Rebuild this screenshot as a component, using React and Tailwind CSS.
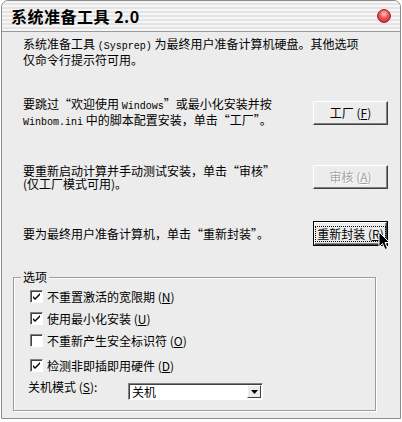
import React from 'react'

const Mono = ({ children }) => (
    <span className="font-['Liberation_Mono',monospace] text-[10px] leading-[13px]">{children}</span>
)

const Key = ({ children }) => <span className="underline">{children}</span>

const Button = ({ children, isDefault, disabled }) => {
    if (isDefault) {
        return (
            <div className="w-[75px] h-[25px] border border-black">
                <div className="w-full h-full border-t border-l border-white border-r border-b border-r-[#404040] border-b-[#404040] shadow-[inset_-1px_-1px_0_#808080] flex items-center justify-center">
                    <div className="border border-dotted border-black px-[1px] leading-[14px] text-[12px]">
                        {children}
                    </div>
                </div>
            </div>
        )
    }
    return (
        <div className="w-[75px] h-[24px] border-t border-l border-white border-r border-b border-r-[#404040] border-b-[#404040] shadow-[inset_-1px_-1px_0_#808080] flex items-center justify-center">
            <span className={disabled ? "text-[12px] text-[#a3a3a3] [text-shadow:1px_1px_0_#ffffff]" : "text-[12px] text-black"}>
                {children}
            </span>
        </div>
    )
}

const Checkbox = ({ checked, children }) => (
    <div className="flex items-center h-[22px] ml-[16px]">
        <div className="w-[13px] h-[13px] bg-white border-t border-l border-t-[#808080] border-l-[#808080] border-r border-b border-r-white border-b-white shadow-[inset_1px_1px_0_#404040] flex items-center justify-center">
            {checked && (
                <svg width="9" height="9" viewBox="0 0 9 9">
                    <path d="M1 4 L3 6 L8 1 L8 3 L3 8 L1 6 Z" fill="#000" />
                </svg>
            )}
        </div>
        <span className="ml-[4px] text-[12px] leading-[13px]">{children}</span>
    </div>
)

export default function App() {
    return (
        <div className="w-[402px] h-[422px] bg-white font-['Noto_Sans_CJK_SC','Noto_Sans',sans-serif] text-black">
            <div className="relative mx-[1px] h-[419px] border border-[#8c8c8c] rounded-t-[7px] overflow-hidden bg-[#ececec] flex flex-col">
                {/* title bar */}
                <div className="h-[31px] shrink-0 border-b border-[#9a9a9a] bg-[repeating-linear-gradient(180deg,#f6f6f6_0px,#f6f6f6_2px,#e4e4e4_2px,#e4e4e4_4px)] flex items-center justify-between pl-[9px] pr-[9px]">
                    <span className="text-[16px] font-bold leading-[20px] tracking-[0.5px]">系统准备工具 2.0</span>
                    <div className="w-[14px] h-[14px] rounded-full border border-[#9b2a2a] bg-[radial-gradient(circle_at_50%_35%,#ffd0d0_0%,#f05050_45%,#b82020_100%)]" />
                </div>

                <div className="flex flex-col pl-[11px] pt-[5px] text-[12px]">
                    <div className="ml-[10px] leading-[13px] whitespace-nowrap">
                        <div>系统准备工具 <Mono>(Sysprep)</Mono> 为最终用户准备计算机硬盘。其他选项</div>
                        <div>仅命令行提示符可用。</div>
                    </div>

                    <div className="ml-[10px] w-[365px] mt-[34px] h-[26px] flex items-center justify-between">
                        <div className="leading-[13px] whitespace-nowrap">
                            <div>要跳过“欢迎使用 <Mono>Windows</Mono>”或最小化安装并按</div>
                            <div><Mono>Winbom.ini</Mono> 中的脚本配置安装，单击“工厂”。</div>
                        </div>
                        <Button>工厂 (<Key>F</Key>)</Button>
                    </div>

                    <div className="ml-[10px] w-[365px] mt-[38px] h-[26px] flex items-center justify-between">
                        <div className="leading-[13px] whitespace-nowrap">
                            <div>要重新启动计算并手动测试安装，单击“审核”</div>
                            <div>(仅工厂模式可用)。</div>
                        </div>
                        <Button disabled>审核 (<Key>A</Key>)</Button>
                    </div>

                    <div className="ml-[10px] w-[365px] mt-[31px] h-[25px] flex items-center justify-between">
                        <div className="leading-[13px] whitespace-nowrap">要为最终用户准备计算机，单击“重新封装”。</div>
                        <Button isDefault>重新封装 (<Key>R</Key>)</Button>
                    </div>

                    {/* options group */}
                    <div className="relative mt-[31px] w-[363px] h-[134px] border border-[#9c9c9c] shadow-[1px_1px_0_#ffffff,inset_1px_1px_0_#ffffff] pt-[7px]">
                        <span className="absolute -top-[8px] left-[7px] px-[2px] bg-[#ececec] leading-[14px]">选项</span>
                        <Checkbox checked>不重置激活的宽限期 (<Key>N</Key>)</Checkbox>
                        <Checkbox checked>使用最小化安装 (<Key>U</Key>)</Checkbox>
                        <Checkbox>不重新产生安全标识符 (<Key>O</Key>)</Checkbox>
                        <div className="mt-[3px]">
                            <Checkbox checked>检测非即插即用硬件 (<Key>D</Key>)</Checkbox>
                        </div>
                        <div className="flex items-start mt-[4px] ml-[14px]">
                            <span className="leading-[13px] w-[100px]">关机模式 (<Key>S</Key>):</span>
                            <div className="mt-[3px] w-[135px] h-[17px] bg-white border-t border-l border-t-[#808080] border-l-[#808080] border-r border-b border-r-white border-b-white shadow-[inset_1px_1px_0_#404040] flex items-center justify-between pl-[3px] pr-[1px]">
                                <span className="leading-[13px]">关机</span>
                                <div className="w-[14px] h-[13px] bg-[#ececec] border-t border-l border-white border-r border-b border-r-[#404040] border-b-[#404040] flex items-center justify-center">
                                    <svg width="7" height="4" viewBox="0 0 7 4">
                                        <path d="M0 0 H7 L3.5 4 Z" fill="#000" />
                                    </svg>
                                </div>
                            </div>
                        </div>
                    </div>
                </div>

                {/* mouse pointer */}
                <svg className="absolute left-[376px] top-[230px]" width="13" height="20" viewBox="0 0 13 20">
                    <path d="M1 1 L1 16 L4.5 12.5 L7 18.5 L9.5 17.5 L7 11.5 L11.5 11.5 Z" fill="#000" stroke="#fff" strokeWidth="1" />
                </svg>
            </div>
        </div>
    )
}
